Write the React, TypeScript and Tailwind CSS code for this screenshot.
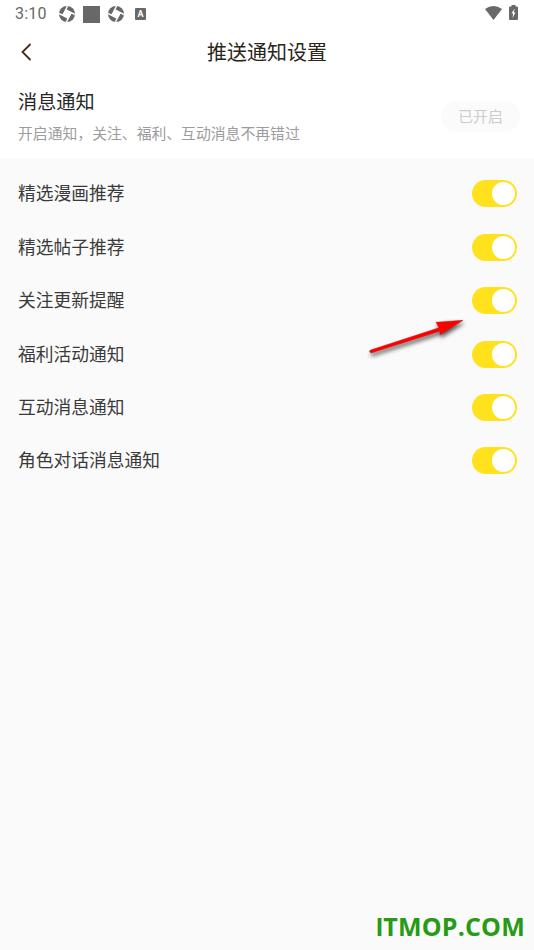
import React, { useState } from "react";

interface ToggleProps {
    label: string;
    checked: boolean;
    onChange: () => void;
}

const titles = [
    "精选漫画推荐",
    "精选帖子推荐",
    "关注更新提醒",
    "福利活动通知",
    "互动消息通知",
    "角色对话消息通知",
];

const ShutterIcon = () => (
    <svg className="h-4 w-4" viewBox="0 0 16 16">
        <circle cx="8" cy="8" r="8" fill="#686868" />
        <path d="M7.200 3.300 12.700 7.200 8.800 12.700 3.300 8.800Z" fill="#fff" />
        <path
            d="M4.200 8.600 8.600 0M7.400 4.200 16 8.600M11.800 7.400 7.400 16M8.600 11.800 0 7.400"
            stroke="#fff"
            strokeWidth="1.400"
        />
    </svg>
);

const StatusBar = () => (
    <div className="flex h-7 items-center pr-4 pl-[15px] text-[#686868]">
        <span className="w-[44px] font-[Roboto,sans-serif] text-[16px] leading-none tracking-[0.2px] text-[#686868]">
            3:10
        </span>
        <ShutterIcon />
        <div className="ml-2 h-[17px] w-[17px] bg-[#686868]" />
        <div className="ml-2">
            <ShutterIcon />
        </div>
        <div className="ml-[11px] flex h-[12px] w-[11px] items-center justify-center rounded-[1px] bg-[#686868] font-[Roboto,sans-serif] text-[9px] leading-none font-bold text-white">
            A
        </div>
        <svg className="mt-[-3px] mr-[7px] ml-auto h-[14px] w-[17px]" viewBox="0 0 17 14" fill="#686868">
            <path d="M0 3Q8.500-3 17 3L8.500 14Z" />
        </svg>
        <svg className="mt-[-3px] h-[15px] w-[9px]" viewBox="0 0 9 15">
            <path d="M2.500 0h4v1.500H8a1 1 0 0 1 1 1V14a1 1 0 0 1-1 1H1a1 1 0 0 1-1-1V2.500a1 1 0 0 1 1-1h1.500Z" fill="#686868" />
            <path d="M5.500 3.500 2.500 8.500h1.700L3.500 13l3-5.500H4.900Z" fill="#fff" />
        </svg>
    </div>
);

const ToggleRow = ({ label, checked, onChange }: ToggleProps) => (
    <div className="flex h-[53.45px] items-center justify-between pr-[17.5px] pl-[18px]">
        <span className="pb-[1.200px] text-[17.75px] leading-none text-[#3a3a3a]">{label}</span>
        <button
            role="switch"
            aria-checked={checked}
            aria-label={label}
            onClick={onChange}
            className={`flex h-[27px] w-[44.5px] items-center rounded-full px-[2px] ${
                checked ? "justify-end bg-[#ffe11e]" : "justify-start bg-gray-300"
            }`}
        >
            <span className="h-[23px] w-[23px] rounded-full bg-white" />
        </button>
    </div>
);

const App = () => {
    const [enabled, setEnabled] = useState<boolean[]>(titles.map(() => true));

    const toggle = (idx: number) =>
        setEnabled((prev) => prev.map((v, i) => (i === idx ? !v : v)));

    return (
        <div className="relative flex h-[950px] w-[534px] flex-col overflow-hidden bg-[#fafafa] font-['Noto_Sans_CJK_SC',sans-serif]">
            <div className="h-[158px] bg-white">
                <StatusBar />
                <header className="grid h-[48px] grid-cols-[1fr_auto_1fr] items-center">
                    <svg className="ml-[21px] h-[18px] w-[11px]" viewBox="0 0 11 18" fill="none">
                        <path d="M9.500 1 1.500 9l8 8" stroke="#4a2a1c" strokeWidth="1.800" />
                    </svg>
                    <h1 className="text-[20px] leading-none text-[#2b2418]">推送通知设置</h1>
                </header>
                <section className="flex items-center justify-between pt-[14px] pr-[14px] pl-[18px]">
                    <div>
                        <h2 className="text-[19.2px] leading-[22px] text-[#282828]">消息通知</h2>
                        <p className="mt-[11px] text-[14.84px] leading-[20px] text-[#9c9c9c]">
                            开启通知，关注、福利、互动消息不再错过
                        </p>
                    </div>
                    <button className="h-[31px] w-[79px] rounded-full bg-[#fbfbfb] text-[14.8px] leading-none text-[#ccc]">
                        已开启
                    </button>
                </section>
            </div>

            <main className="pt-[9px]">
                {titles.map((title, idx) => (
                    <ToggleRow
                        key={title}
                        label={title}
                        checked={enabled[idx]}
                        onChange={() => toggle(idx)}
                    />
                ))}
            </main>

            {/* arrow pointing at the third switch */}
            <svg
                className="pointer-events-none absolute top-[310px] left-[360px] h-[56px] w-[116px] drop-shadow-[1px_3px_2px_rgba(0,0,0,0.65)]"
                viewBox="0 0 116 56"
            >
                <path
                    d="M10 40.300 79 17.800 76 12.300 103 10.300 80 24.800 80.300 21 11 43Q9 42 10 40.300Z"
                    fill="#ff0000"
                    stroke="#d01010"
                    strokeWidth="0.500"
                />
            </svg>

            <div className="absolute right-[9px] bottom-[10px] font-['Open_Sans',sans-serif] text-[25px] leading-[26px] font-bold tracking-[0.2px] whitespace-nowrap text-[#279a16]">
                <span className="font-['Liberation_Sans',sans-serif]">I</span>TMOP.COM
            </div>
        </div>
    );
};

export default App;
